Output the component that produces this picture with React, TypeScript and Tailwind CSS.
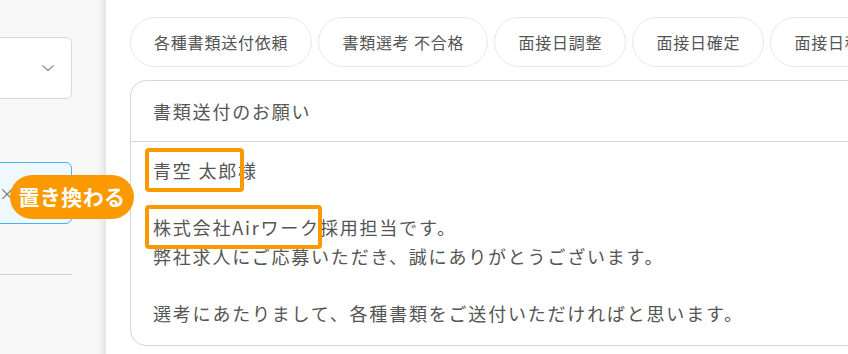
const chips = ["各種書類送付依頼", "書類選考 不合格", "面接日調整", "面接日確定", "面接日程"];

function Marked({ children, right }: { children: React.ReactNode; right: string }) {
  return (
    <span className="relative inline-block">
      {children}
      <span className={`pointer-events-none absolute -left-[8px] -top-[8px] -bottom-[7px] ${right} rounded-[4px] border-[4px] border-[#fb9a00]`} />
    </span>
  );
}

export default function App() {
  return (
    <div
      className="relative flex h-[354px] w-[848px] overflow-hidden bg-white text-[#555]"
      style={{ fontFamily: '"Noto Sans CJK JP", "Noto Sans", sans-serif' }}
    >
      {/* left form panel */}
      <div className="relative w-[106px] shrink-0 bg-[#f8f8f8] shadow-[inset_-12px_0_10px_-10px_rgba(0,0,0,0.12)]">
        <div className="ml-[-30px] mt-[37px] flex h-[62px] w-[102px] items-center justify-end rounded-[6px] border border-[#d9d9d9] bg-white pr-[17px]">
          <svg width="12" height="7" viewBox="0 0 12 7" fill="none">
            <path d="M1 1l5 4.5L11 1" stroke="#999" strokeWidth="1.6" strokeLinecap="round" strokeLinejoin="round" />
          </svg>
        </div>
        <div className="ml-[-30px] mt-[63px] flex h-[62px] w-[102px] items-center rounded-[6px] border border-[#45b4ec] bg-[#eff8fe] pl-[28px]">
          <span className="text-[16px] leading-none text-[#777]">×</span>
        </div>
        <div className="mt-[50px] h-px w-[72px] bg-[#cfcfcf]" />
      </div>

      {/* replacement badge */}
      <div className="absolute left-[10px] top-[175px] z-10 flex h-[44px] w-[124px] items-center justify-center rounded-full bg-[#fb9a00] text-[21px] font-bold tracking-[0.02em] text-white">
        置き換わる
      </div>

      {/* right template area */}
      <div className="min-w-0 flex-1 pl-[24px] pt-[17px]">
        <div className="flex gap-[6px]">
          {chips.map((chip) => (
            <div
              key={chip}
              className="flex h-[50px] shrink-0 items-center rounded-full border border-[#e8e8e8] px-[23px] text-[16px] tracking-[0.05em] text-[#555]"
            >
              {chip}
            </div>
          ))}
        </div>

        <div className="mt-[13px] h-[266px] w-[760px] rounded-[16px] border border-[#d6d6d6]">
          <div className="flex h-[61px] items-center border-b border-[#d6d6d6] px-[22px] text-[18px] tracking-[0.1em]">
            書類送付のお願い
          </div>
          <div className="px-[22px] pt-[14px] text-[18px] leading-[28.5px] tracking-[0.1em]">
            <div>
              <Marked right="-right-[6px]">青空 太郎</Marked>様
            </div>
            <div className="h-[28.5px]" />
            <div>
              <Marked right="-right-[2px]">株式会社Airワーク</Marked>採用担当です。
            </div>
            <div>弊社求人にご応募いただき、誠にありがとうございます。</div>
            <div className="h-[28.5px]" />
            <div>選考にあたりまして、各種書類をご送付いただければと思います。</div>
          </div>
        </div>
      </div>
    </div>
  );
}
